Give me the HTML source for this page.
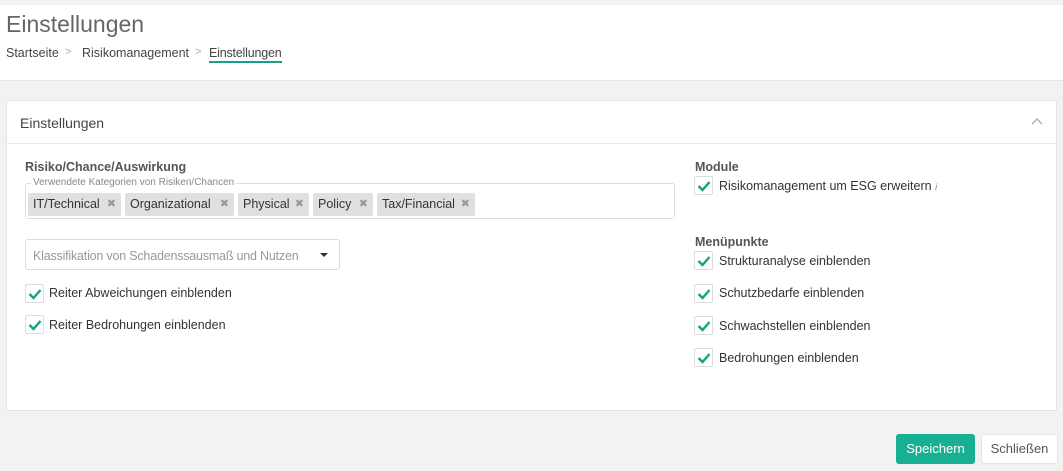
<!DOCTYPE html>
<html><head><meta charset="utf-8"><style>
*{box-sizing:border-box;margin:0;padding:0}
body{width:1063px;height:471px;background:#f2f2f2;font-family:"Liberation Sans",sans-serif;color:#333;position:relative;overflow:hidden;font-size:12.5px}
.abs{position:absolute}
.hdr{left:0;top:5px;width:1063px;height:76px;background:#fff;border-bottom:1px solid #e4e4e4}
.card{left:6px;top:100px;width:1051px;height:311px;background:#fff;border:1px solid #e4e4e4}
.cb{position:absolute;width:19px;height:19px;border:1px solid #ddd;border-radius:2px;background:#fff}
.cb svg{position:absolute;left:2px;top:2px}
.lbl{position:absolute;font-size:12.5px;color:#333;white-space:nowrap}
.tag{position:absolute;top:193px;height:23px;background:#e0e0e0;border-radius:2px;font-size:12.5px;line-height:23px;padding-left:5px;color:#333;white-space:nowrap}
.tag i{position:absolute;right:5px;top:0;font-style:normal;color:#999;font-size:11px}
</style></head><body>
<div class="abs hdr"></div>
<div class="abs" style="left:6px;top:11px;font-size:23px;color:#666">Einstellungen</div>
<div class="abs" style="left:6px;top:46px;font-size:12.5px;color:#444">Startseite</div>
<div class="abs" style="left:65px;top:46px;font-size:11px;color:#aaa">&gt;</div>
<div class="abs" style="left:82px;top:46px;font-size:12.5px;color:#444">Risikomanagement</div>
<div class="abs" style="left:195px;top:46px;font-size:11px;color:#aaa">&gt;</div>
<div class="abs" style="left:209px;top:46px;font-size:12.5px;color:#444;letter-spacing:-0.2px">Einstellungen</div>
<div class="abs" style="left:209px;top:61px;width:73px;height:2px;background:#17a085"></div>
<div class="abs card"></div>
<div class="abs" style="left:7px;top:143px;width:1049px;height:1px;background:#e8e8e8"></div>
<div class="abs" style="left:20px;top:115px;font-size:14px;color:#444">Einstellungen</div>
<svg class="abs" style="left:1031px;top:117px" width="12" height="8"><path d="M1 7L6 2L11 7" stroke="#aaa" fill="none" stroke-width="1.3"/></svg>
<div class="abs" style="left:25px;top:160px;font-weight:bold;font-size:12.5px;color:#555">Risiko/Chance/Auswirkung</div>
<div class="abs" style="left:25px;top:183px;width:650px;height:36px;border:1px solid #ddd;border-radius:3px"></div>
<div class="abs" style="left:31px;top:177px;font-size:10px;color:#888;background:#fff;padding:0 2px">Verwendete Kategorien von Risiken/Chancen</div>
<div class="tag" style="left:28px;width:93px">IT/Technical<i>✖</i></div>
<div class="tag" style="left:125px;width:109px">Organizational<i>✖</i></div>
<div class="tag" style="left:238px;width:71px">Physical<i>✖</i></div>
<div class="tag" style="left:313px;width:60px">Policy<i>✖</i></div>
<div class="tag" style="left:377px;width:98px">Tax/Financial<i>✖</i></div>
<div class="abs" style="left:25px;top:239px;width:315px;height:31px;border:1px solid #ddd;border-radius:3px"></div>
<div class="abs" style="left:33px;top:249px;font-size:12.5px;color:#999;letter-spacing:-0.2px">Klassifikation von Schadenssausmaß und Nutzen</div>
<div class="abs" style="left:320px;top:253px;width:0;height:0;border-left:4px solid transparent;border-right:4px solid transparent;border-top:4px solid #333"></div>

<div class="cb" style="left:25px;top:284px"><svg width="14" height="14"><path d="M1.5 7L5.5 11L12.5 3" stroke="#17a085" stroke-width="2.4" fill="none"/></svg></div>
<div class="lbl" style="left:49px;top:286px">Reiter Abweichungen einblenden</div>
<div class="cb" style="left:25px;top:315px"><svg width="14" height="14"><path d="M1.5 7L5.5 11L12.5 3" stroke="#17a085" stroke-width="2.4" fill="none"/></svg></div>
<div class="lbl" style="left:49px;top:318px">Reiter Bedrohungen einblenden</div>

<div class="abs" style="left:695px;top:160px;font-weight:bold;font-size:12.5px;color:#555">Module</div>
<div class="cb" style="left:694px;top:176px"><svg width="14" height="14"><path d="M1.5 7L5.5 11L12.5 3" stroke="#17a085" stroke-width="2.4" fill="none"/></svg></div>
<div class="lbl" style="left:719px;top:179px">Risikomanagement um ESG erweitern <span style="font-size:9px;color:#888;font-style:italic">i</span></div>
<div class="abs" style="left:695px;top:235px;font-weight:bold;font-size:12.5px;color:#555">Menüpunkte</div>
<div class="cb" style="left:694px;top:251px"><svg width="14" height="14"><path d="M1.5 7L5.5 11L12.5 3" stroke="#17a085" stroke-width="2.4" fill="none"/></svg></div>
<div class="lbl" style="left:719px;top:254px">Strukturanalyse einblenden</div>
<div class="cb" style="left:694px;top:284px"><svg width="14" height="14"><path d="M1.5 7L5.5 11L12.5 3" stroke="#17a085" stroke-width="2.4" fill="none"/></svg></div>
<div class="lbl" style="left:719px;top:286px">Schutzbedarfe einblenden</div>
<div class="cb" style="left:694px;top:316px"><svg width="14" height="14"><path d="M1.5 7L5.5 11L12.5 3" stroke="#17a085" stroke-width="2.4" fill="none"/></svg></div>
<div class="lbl" style="left:719px;top:319px">Schwachstellen einblenden</div>
<div class="cb" style="left:694px;top:348px"><svg width="14" height="14"><path d="M1.5 7L5.5 11L12.5 3" stroke="#17a085" stroke-width="2.4" fill="none"/></svg></div>
<div class="lbl" style="left:719px;top:351px">Bedrohungen einblenden</div>

<div class="abs" style="left:896px;top:434px;width:79px;height:30px;background:#17b092;border-radius:3px;color:#fff;font-size:13px;line-height:30px;text-align:center">Speichern</div>
<div class="abs" style="left:981px;top:434px;width:77px;height:30px;background:#fff;border:1px solid #e4e4e4;border-radius:3px;color:#555;font-size:13px;line-height:28px;text-align:center">Schließen</div>
</body></html>
